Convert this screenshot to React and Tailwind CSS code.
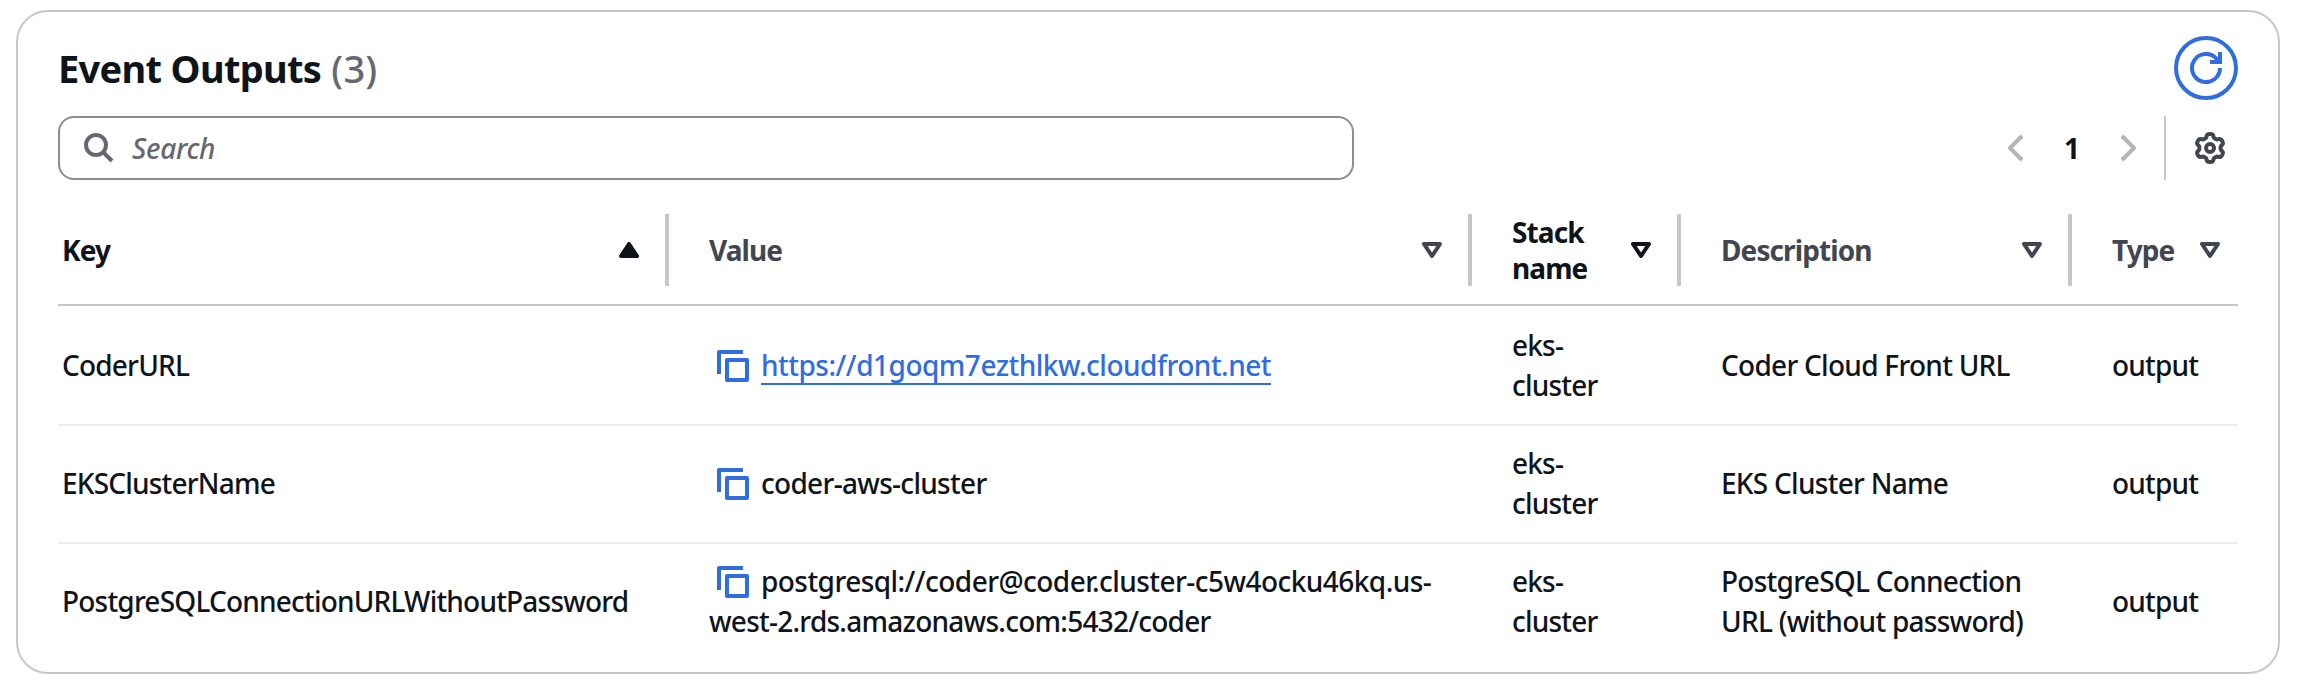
const rows = [
  { key: 'CoderURL', value: 'https://d1goqm7ezthlkw.cloudfront.net', link: true, desc: ['Coder Cloud Front URL'], row: 'h-[120px] border-b-2' },
  { key: 'EKSClusterName', value: 'coder-aws-cluster', desc: ['EKS Cluster Name'], row: 'h-[118px] border-b-2 pb-[2px]' },
  {
    key: 'PostgreSQLConnectionURLWithoutPassword',
    value: 'postgresql://coder@coder.cluster-c5w4ocku46kq.us-',
    rest: 'west-2.rds.amazonaws.com:5432/coder',
    desc: ['PostgreSQL Connection', 'URL (without password)'],
    row: 'h-[114px]',
  },
];

// Six rounded teeth around the centre of a 32x32 box.
const gearPath =
  Array.from({ length: 120 }, (_, i) => {
    const a = (i / 120) * 2 * Math.PI;
    const r = 12.3 + 1.75 * Math.tanh(2 * Math.cos(6 * a) + 0.2);
    return `${i ? 'L' : 'M'}${(16 + r * Math.sin(a)).toFixed(2)} ${(16 - r * Math.cos(a)).toFixed(2)}`;
  }).join(' ') + ' Z';

function SortIcon({ up }) {
  return up ? (
    <svg className="block h-4 w-5" viewBox="0 0 20 16"><path d="M10 2 L18 14 H2 Z" fill="currentColor" stroke="currentColor" strokeWidth="4" strokeLinejoin="round" /></svg>
  ) : (
    <svg className="block h-4 w-5" viewBox="0 0 20 16"><path d="M2 2 H18 L10 14 Z" fill="none" stroke="currentColor" strokeWidth="4" strokeLinejoin="round" /></svg>
  );
}

function CopyIcon() {
  return (
    <svg className="mt-[2px] ml-2 block h-8 w-8 shrink-0 text-[#2f6de0]" viewBox="0 0 32 32" fill="none" stroke="currentColor" strokeWidth="4" strokeLinejoin="round">
      <path d="M2 24 V2 H26" />
      <path d="M10 10 H30 V30 H10 Z" />
    </svg>
  );
}

function Header({ children, divider = true, dark, up, className = '' }) {
  return (
    <div className={`flex h-[72px] items-center justify-between ${divider ? 'border-r-4 border-[#c6c6cd]' : ''} ${dark ? 'text-[#0f141a]' : 'text-[#424650]'} ${className}`}>
      <div className="font-bold leading-9 tracking-[-0.9px]">{children}</div>
      <SortIcon up={up} />
    </div>
  );
}

export default function App() {
  return (
    <div className="h-[684px] w-[2298px] bg-white pt-[10px] pl-4 font-['Noto_Sans','Open_Sans',sans-serif] text-[28px] leading-10 tracking-[-0.8px] font-medium text-[#0f141a]">
      <div className="h-[664px] w-[2264px] rounded-[32px] border-2 border-[#c6c6cd] px-10 pt-6">
        <div className="flex h-16 items-center justify-between">
          <h1 className="text-[38px] font-bold tracking-[-0.7px]">
            Event Outputs <span className="ml-px font-medium tracking-[0.2px] text-[#656871]">(3)</span>
          </h1>
          <button className="flex size-16 items-center justify-center rounded-full border-4 border-[#2f6de0] text-[#2f6de0]">
            <svg className="size-8" viewBox="0 0 32 32" fill="none" stroke="currentColor" strokeWidth="4">
              <path d="M30 16 A14 14 0 1 1 26.5 6.8 L29 10" />
              <path d="M30 0 V10 H20" />
            </svg>
          </button>
        </div>

        <div className="mt-4 flex h-16 items-center justify-between">
          <div className="flex h-16 w-[1296px] items-center rounded-2xl border-2 border-[#8c8c94] pl-6 text-[#656871]">
            <svg className="size-[30px]" viewBox="0 0 30 30" fill="none" stroke="currentColor" strokeWidth="4"><circle cx="12" cy="12" r="10" /><path d="M19 19 L28 28" /></svg>
            <span className="ml-[18px] italic tracking-[-0.3px]">Search</span>
          </div>
          <div className="flex h-16 items-center">
            <svg className="h-7 w-4 text-[#b4b4bb]" viewBox="0 0 16 28" fill="none" stroke="currentColor" strokeWidth="4" strokeLinejoin="round"><path d="M14 2 L2 14 L14 26" /></svg>
            <span className="mx-10 w-4 text-center font-bold tracking-normal">1</span>
            <svg className="h-7 w-4 text-[#b4b4bb]" viewBox="0 0 16 28" fill="none" stroke="currentColor" strokeWidth="4" strokeLinejoin="round"><path d="M2 2 L14 14 L2 26" /></svg>
            <div className="ml-7 h-16 w-[2px] bg-[#c6c6cd]" />
            <svg className="mr-3 ml-7 size-8 text-[#424650]" viewBox="0 0 32 32" fill="none" stroke="currentColor" strokeWidth="4" strokeLinejoin="round">
              <circle cx="16" cy="16" r="4" />
              <path d={gearPath} />
            </svg>
          </div>
        </div>

        <div className="mt-6 grid grid-cols-[611px_803px_209px_391px_166px] border-b-2 border-[#c6c6cd] pt-[10px] pb-[18px]">
          <Header dark up className="pr-[26px] pl-1">Key</Header>
          <Header className="pr-[26px] pl-10">Value</Header>
          <Header dark className="pr-[26px] pl-10">Stack<br />name</Header>
          <Header className="pr-[26px] pl-10">Description</Header>
          <Header divider={false} className="pr-[18px] pl-10">Type</Header>
        </div>

        {rows.map((r) => (
          <div key={r.key} className={`grid grid-cols-[651px_803px_209px_391px_124px] items-center border-[#ebebf0] ${r.row}`}>
            <div className="pl-1">{r.key}</div>
            <div>
              <div className="flex items-center">
                <CopyIcon />
                {r.link ? (
                  <a className="ml-3 h-10 border-b-2 border-[#2f6de0] tracking-[-0.5px] text-[#2f6de0]">{r.value}</a>
                ) : (
                  <span className={r.rest ? 'ml-3 tracking-[-0.55px]' : 'ml-3 tracking-[-0.7px]'}>{r.value}</span>
                )}
              </div>
              {r.rest && <div className="tracking-[-0.75px]">{r.rest}</div>}
            </div>
            <div>eks-<br />cluster</div>
            <div className="tracking-[-0.73px]">{r.desc.map((d) => <div key={d}>{d}</div>)}</div>
            <div>output</div>
          </div>
        ))}
      </div>
    </div>
  );
}
